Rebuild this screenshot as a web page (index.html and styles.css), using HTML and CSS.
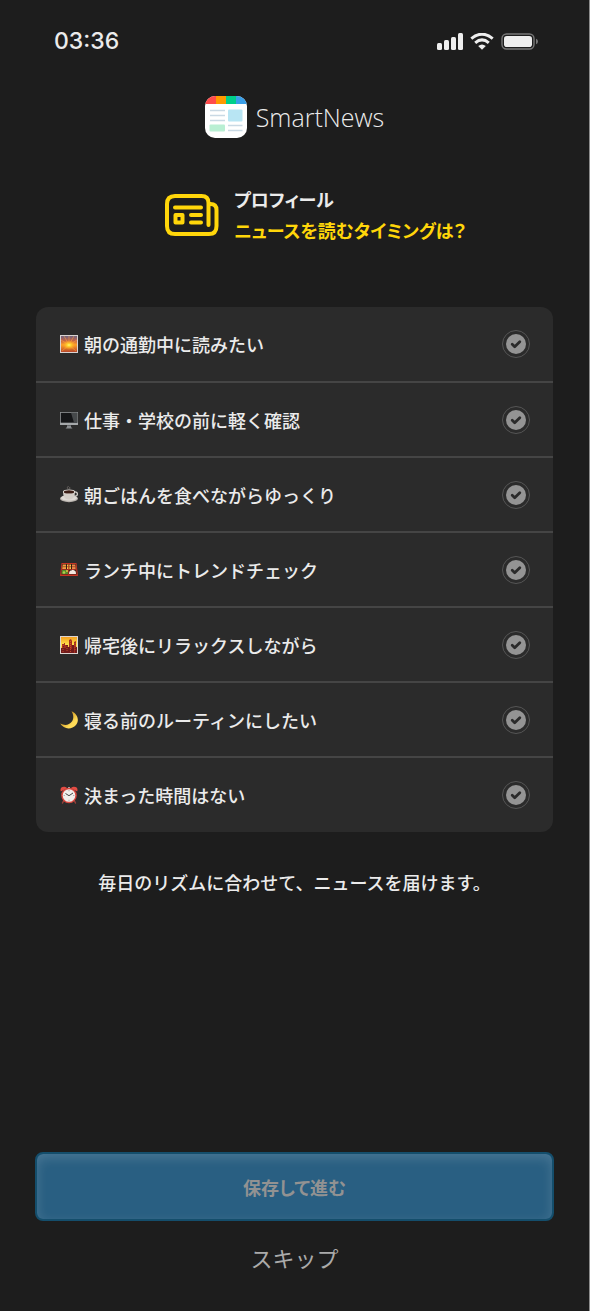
FILE: index.html
```html
<!DOCTYPE html>
<html lang="ja">
<head>
  <meta charset="UTF-8">
  <title>SmartNews</title>
  <meta name="viewport" content="width=device-width, initial-scale=1">
  <link rel="stylesheet" href="styles.css">
</head>

<body>

  <!-- ステータスバー -->
  <div class="status-bar">
    <span class="time">03:36</span>
    <div class="status-icons">
      <svg width="26" height="17" viewBox="0 0 26 17" fill="#eee">
        <rect x="0" y="10" width="5" height="7" rx="1.5"/>
        <rect x="7" y="7" width="5" height="10" rx="1.5"/>
        <rect x="14" y="4" width="5" height="13" rx="1.5"/>
        <rect x="21" y="0" width="5" height="17" rx="1.5"/>
      </svg>
      <svg width="24" height="17" viewBox="0 0 24 17" fill="none" stroke="#eee" stroke-width="3">
        <path d="M1.3 5.6Q12 -3.2 22.7 5.6"/>
        <path d="M5.2 9.8Q12 4 18.8 9.8"/>
        <path d="M12 16.8L8.2 13.1Q12 9.9 15.8 13.1Z" fill="#eee" stroke="none"/>
      </svg>
      <svg width="37" height="17" viewBox="0 0 37 17">
        <rect x="1" y="1" width="32" height="15" rx="4.5" fill="none" stroke="#777" stroke-width="1.4"/>
        <rect x="3" y="3" width="28" height="11" rx="2.8" fill="#eee"/>
        <path d="M35 5.7Q37 6.5 37 8.5T35 11.3Z" fill="#777"/>
      </svg>
    </div>
  </div>

  <!-- ロゴ -->
  <header class="brand">
    <svg width="42" height="42" viewBox="0 0 42 42">
      <defs>
        <clipPath id="logoClip"><rect width="42" height="42" rx="10"/></clipPath>
      </defs>
      <g clip-path="url(#logoClip)">
        <rect width="42" height="42" fill="#fff"/>
        <rect width="11" height="8" fill="#ff4b4b"/>
        <rect x="11" width="10" height="8" fill="#ff9900"/>
        <rect x="21" width="10" height="8" fill="#00cf8a"/>
        <rect x="31" width="11" height="8" fill="#3a9fe8"/>
      </g>
      <rect x="23" y="13.5" width="14.5" height="12" rx="1" fill="#b8e5f3"/>
      <rect x="4.5" y="28.5" width="15.5" height="7" rx="1" fill="#b9efd3"/>
      <path d="M5 14.5h15M5 19.5h15M5 24.5h15M23 29.5h14.5M23 34.5h14.5" stroke="#c9d9e4" stroke-width="1.5"/>
    </svg>
    <span class="brand-name">SmartNews</span>
  </header>

  <main>
    <!-- 見出し -->
    <div class="intro">
      <svg width="54" height="42" viewBox="0 0 54 42" fill="none" stroke="#ffd60a" stroke-width="4" stroke-linecap="round">
        <path d="M43.5 31V9Q43.5 2 36.5 2H10Q2 2 2 10V32Q2 40 10 40H44Q51.5 40 51.5 32V16Q51.5 10 45.5 10"/>
        <path d="M10 13.5H36M26 21H36M26 28.5H36"/>
        <path d="M10.5 21H17.5V28.5H10.5Z" stroke-linejoin="round"/>
      </svg>
      <h1 class="intro-text">
        <span>プロフィール</span>
        <span class="question">ニュースを読むタイミングは？</span>
      </h1>
    </div>

    <svg class="sprite" width="0" height="0">
      <symbol id="check" viewBox="0 0 12 12">
        <path d="M2.2 6.3L4.7 8.7L9.8 3.7" fill="none" stroke="#2b2b2b" stroke-width="2.8" stroke-linecap="round" stroke-linejoin="round"/>
      </symbol>
    </svg>

    <!-- 選択肢 -->
    <form id="timingForm">
      <ul class="options">
        <li>
          <label class="option">
            <svg class="emoji" viewBox="0 0 18 18">
              <defs>
                <linearGradient id="dawn" x1="0" y1="0" x2="0" y2="1">
                  <stop offset="0" stop-color="#6d6382"/>
                  <stop offset=".3" stop-color="#c86445"/>
                  <stop offset=".55" stop-color="#ffa126"/>
                  <stop offset="1" stop-color="#b6472b"/>
                </linearGradient>
                <radialGradient id="sun">
                  <stop offset="0" stop-color="#fffb75"/>
                  <stop offset=".3" stop-color="#ffd02e"/>
                  <stop offset="1" stop-color="#ff9420" stop-opacity="0"/>
                </radialGradient>
              </defs>
              <rect width="18" height="18" fill="#d8d3d2"/>
              <rect x="1" y="1" width="16" height="16" fill="url(#dawn)"/>
              <path d="M9 10L1 5M9 10L4 1M9 10V1M9 10L14 1M9 10L17 5M9 10L2 16M9 10L16 16" stroke="#ffae3d" stroke-width=".7" opacity=".7"/>
              <ellipse cx="9" cy="10" rx="7" ry="5" fill="url(#sun)"/>
            </svg>
            <span class="option-text">朝の通勤中に読みたい</span>
            <input type="checkbox" name="timing" value="commute">
            <svg class="mark"><use href="#check"/></svg>
          </label>
        </li>
        <li>
          <label class="option">
            <svg class="emoji" viewBox="0 0 18 18">
              <path d="M7 13H11V16L12.5 17.5H5.5L7 16Z" fill="#8a8d90"/>
              <rect y="1" width="18" height="13" rx=".6" fill="#a5a8aa"/>
              <rect x=".7" y="1.7" width="16.6" height="10" fill="#151618"/>
              <path d="M11 1.7H17.3V11.7H14Z" fill="#46494b"/>
              <path d="M7 14H11V15H7Z" fill="#606366"/>
            </svg>
            <span class="option-text">仕事・学校の前に軽く確認</span>
            <input type="checkbox" name="timing" value="before-work">
            <svg class="mark"><use href="#check"/></svg>
          </label>
        </li>
        <li>
          <label class="option">
            <svg class="emoji" viewBox="0 0 18 18">
              <path d="M8 3Q6.5 1.5 8.5 0M10 3Q9 1.8 10 1" fill="none" stroke="#77716d" stroke-width=".8"/>
              <ellipse cx="9" cy="12.5" rx="9" ry="3.7" fill="#b9b3ae"/>
              <ellipse cx="9" cy="12" rx="8" ry="2.8" fill="#ded9d4"/>
              <ellipse cx="15" cy="8" rx="2.4" ry="2.2" fill="none" stroke="#d5d0cb" stroke-width="1.2"/>
              <path d="M3 5.5Q3 13.5 9 13.5T15 5.5Z" fill="#d3cdc7"/>
              <ellipse cx="9" cy="5.7" rx="6" ry="2.3" fill="#eee9e4"/>
              <ellipse cx="9" cy="5.9" rx="5.2" ry="1.7" fill="#3b1d15"/>
            </svg>
            <span class="option-text">朝ごはんを食べながらゆっくり</span>
            <input type="checkbox" name="timing" value="breakfast">
            <svg class="mark"><use href="#check"/></svg>
          </label>
        </li>
        <li>
          <label class="option">
            <svg class="emoji" viewBox="0 0 18 18">
              <path d="M1.5 2H16.5L18 15H0Z" fill="#c53424"/>
              <path d="M2.3 3H15.7L16.7 13.5H1.3Z" fill="#351d15"/>
              <path d="M2.7 3.5H6V8H2.2Z" fill="#f0a043"/>
              <path d="M7 3.5H8.7V8H7ZM9.3 3.5H11V8H9.3Z" fill="#ffc448"/>
              <path d="M12 3.5H15.3L15.7 8H12Z" fill="#ef8a48"/>
              <path d="M3 5.7H6M7 5.7H11M12 5.7H15" stroke="#883a1e" stroke-width=".7"/>
              <path d="M2 9H8V13H1.5Z" fill="#568b2b"/>
              <circle cx="4" cy="11.5" r="1.3" fill="#b4cf4d"/>
              <circle cx="7" cy="10" r="1" fill="#e4bd40"/>
              <path d="M9 13Q9 9 11.5 9.5Q13 7.5 14 9.5Q16 9 16 13Z" fill="#f2e7df"/>
              <path d="M8.6 2V14M1.5 8.5H16.5" stroke="#c53424" stroke-width=".7"/>
            </svg>
            <span class="option-text">ランチ中にトレンドチェック</span>
            <input type="checkbox" name="timing" value="lunch">
            <svg class="mark"><use href="#check"/></svg>
          </label>
        </li>
        <li>
          <label class="option">
            <svg class="emoji" viewBox="0 0 18 18">
              <defs>
                <linearGradient id="dusk" x1="0" y1="0" x2="0" y2="1">
                  <stop offset="0" stop-color="#f5a020"/>
                  <stop offset=".5" stop-color="#ffe34d"/>
                  <stop offset="1" stop-color="#ef852b"/>
                </linearGradient>
              </defs>
              <rect width="18" height="18" fill="#ddd5d1"/>
              <rect x="1" y="1" width="16" height="16" fill="url(#dusk)"/>
              <path d="M2 17V8H4V7H5V9H7V17ZM9 17V4L11 3L12 5V17ZM14 17V6L16 5V17Z" fill="#a32d1f"/>
              <path d="M1 17V12H3V10H4V12H6V9H8V17ZM8 17V11H10V13H12V9H14V17ZM15 17V11H17V17Z" fill="#721b1b"/>
              <path d="M3 9V16M7 10V16M10.500 5V16M15 7V15" stroke="#d8572b" stroke-width=".8" stroke-dasharray="1 1"/>
            </svg>
            <span class="option-text">帰宅後にリラックスしながら</span>
            <input type="checkbox" name="timing" value="after-work">
            <svg class="mark"><use href="#check"/></svg>
          </label>
        </li>
        <li>
          <label class="option">
            <svg class="emoji" viewBox="0 0 18 18">
              <defs>
                <linearGradient id="moon" x1="0" y1="0" x2="1" y2="1">
                  <stop offset=".4" stop-color="#d9a62c"/>
                  <stop offset=".7" stop-color="#ffdc58"/>
                </linearGradient>
              </defs>
              <path d="M11.5 .3C17.5 2.8 19.8 9.5 16 14C11.5 19.3 3.5 18.3 .2 12.6C4.5 14.8 9.3 14.2 11.7 10.8C14.1 7.5 13.6 3.5 11.5 .3Z" fill="url(#moon)"/>
            </svg>
            <span class="option-text">寝る前のルーティンにしたい</span>
            <input type="checkbox" name="timing" value="bedtime">
            <svg class="mark"><use href="#check"/></svg>
          </label>
        </li>
        <li>
          <label class="option">
            <svg class="emoji" viewBox="0 0 18 18">
              <path d="M4 14L2.5 17M14 14L15.5 17" stroke="#99413b" stroke-width="1.5" stroke-linecap="round"/>
              <path d="M9 3V1" stroke="#aaa" stroke-width="2"/>
              <path d="M.8 5.5Q-.5 1 4 .7Q6.500 .5 7 2.3ZM17.2 5.5Q18.5 1 14 .7Q11.5 .5 11 2.3Z" fill="#e34c43"/>
              <circle cx="9" cy="9.5" r="7.8" fill="#d6473e"/>
              <circle cx="9" cy="9.5" r="6.3" fill="#f1efec"/>
              <path d="M9 4.2V5.2M9 13.8V14.8M3.7 9.5H4.7M13.3 9.5H14.3" stroke="#777" stroke-width=".7"/>
              <path d="M5.5 7.5L9 9.7L13 7" fill="none" stroke="#333" stroke-width=".9"/>
            </svg>
            <span class="option-text">決まった時間はない</span>
            <input type="checkbox" name="timing" value="anytime">
            <svg class="mark"><use href="#check"/></svg>
          </label>
        </li>
      </ul>
    </form>

    <p class="note">毎日のリズムに合わせて、ニュースを届けます。</p>
  </main>

  <!-- 下部ボタン -->
  <footer class="actions">
    <button type="submit" form="timingForm" class="save">保存して進む</button>
    <button type="button" class="skip">スキップ</button>
  </footer>

</body>
</html>
```
FILE: styles.css
```css
* {
  box-sizing: border-box;
}

body {
  display: flex;
  flex-direction: column;
  min-height: 100vh;
  margin: 0;
  padding: 0 35px 36px;
  background: #1d1d1d;
  border-right: 1px solid #8c8c8c;
  color: #ebebeb;
  font-family: "Noto Sans CJK JP", sans-serif;
  font-size: 18px;
}

svg {
  flex: none;
}

/* ステータスバー */
.status-bar {
  display: flex;
  justify-content: space-between;
  align-items: center;
  padding: 24px 16px 0 19px;
  height: 58px;
}

.time {
  font-family: Inter, sans-serif;
  font-size: 23px;
  font-weight: 500;
  line-height: 32px;
}

.status-icons {
  display: flex;
  align-items: center;
  gap: 7px;
}

/* ロゴ */
.brand {
  display: flex;
  justify-content: center;
  align-items: center;
  gap: 9px;
  margin-top: 38px;
}

.brand-name {
  font-family: "Open Sans", sans-serif;
  font-size: 25px;
  font-weight: 300;
  line-height: 42px;
}

/* 見出し */
.intro {
  display: flex;
  justify-content: center;
  align-items: center;
  gap: 15px;
  margin: 46px 0 61px;
  padding-left: 42px;
}

.intro-text {
  display: flex;
  flex-direction: column;
  margin: 0;
  font-size: 18px;
  font-weight: 700;
  line-height: 31px;
  font-feature-settings: "palt";
}

.question {
  color: #ffd60a;
}

.sprite {
  position: absolute;
}

/* 選択肢 */
.options {
  margin: 0 1px;
  padding: 0;
  list-style: none;
  background: #2b2b2b;
  border-radius: 12px;
}

.options li + li {
  border-top: 2px solid #454545;
}

.option {
  display: grid;
  grid-template-columns: 18px 1fr 28px;
  align-items: center;
  column-gap: 6px;
  height: 73px;
  padding: 0 23px 0 24px;
  font-weight: 500;
  cursor: pointer;
}

.options li:first-child .option,
.options li:last-child .option {
  height: 74px;
}

.emoji {
  width: 18px;
  height: 18px;
}

.option input {
  grid-area: 1 / 3;
  appearance: none;
  width: 28px;
  height: 28px;
  margin: 0;
  padding: 3px;
  border: 1px solid #555;
  border-radius: 50%;
  background: #949494 content-box;
  cursor: pointer;
}

.mark {
  grid-area: 1 / 3;
  justify-self: center;
  width: 12px;
  height: 12px;
  pointer-events: none;
}

.option input:checked {
  background-color: #ffd60a;
}

.note {
  margin: 36px 0 0;
  font-weight: 500;
  line-height: 28px;
  text-align: center;
}

/* 下部ボタン */
.actions {
  display: flex;
  flex-direction: column;
  gap: 18px;
  margin-top: auto;
}

.actions button {
  font-family: inherit;
  cursor: pointer;
}

.save {
  height: 69px;
  border: 2px solid #144e6c;
  border-radius: 8px;
  background: #295f82;
  box-shadow: inset 0 4px 12px rgba(255, 255, 255, .15);
  color: #929292;
  font-size: 18px;
  font-weight: 700;
  font-feature-settings: "palt";
}

.skip {
  align-self: center;
  padding: 0;
  border: none;
  background: none;
  color: #aaa;
  font-size: 22px;
  line-height: 36px;
}
```
